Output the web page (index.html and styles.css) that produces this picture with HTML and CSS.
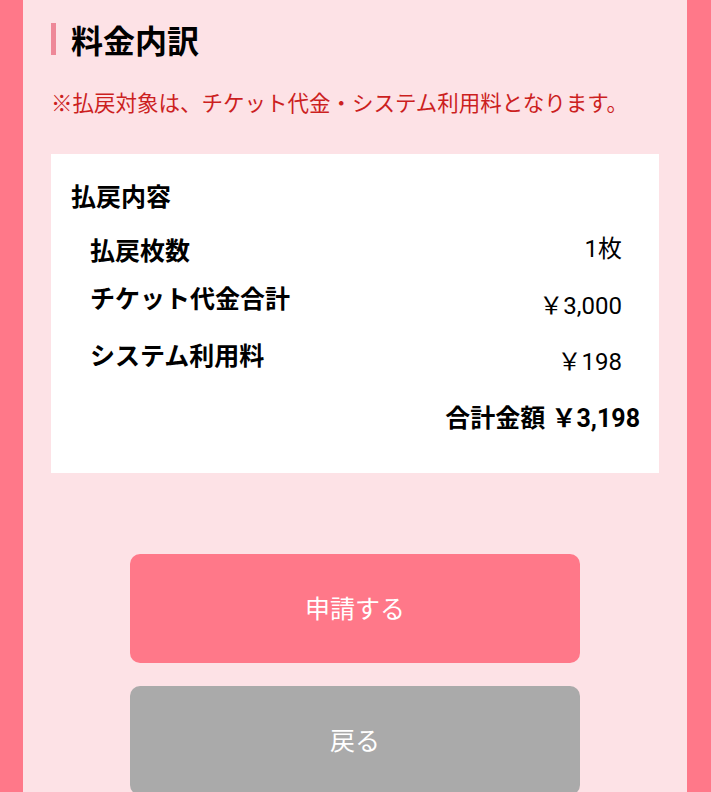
FILE: index.html
```html
<!DOCTYPE html>
<html lang="ja">
<head>
<meta charset="utf-8">
<link rel="stylesheet" href="styles.css">
</head>
<body>
<div class="frame">
  <main class="content">
    <h2 class="heading">料金内訳</h2>
    <p class="note">※払戻対象は、チケット代金・システム利用料となります。</p>
    <section class="box">
      <h3 class="box-title">払戻内容</h3>
      <div class="row">
        <span class="label">払戻枚数</span>
        <span class="value">1枚</span>
      </div>
      <div class="row">
        <span class="label">チケット代金合計</span>
        <span class="value value-low">￥3,000</span>
      </div>
      <div class="row">
        <span class="label">システム利用料</span>
        <span class="value value-low2">￥198</span>
      </div>
      <div class="total">合計金額 ￥3,198</div>
    </section>
    <div class="actions">
      <button class="btn btn-primary">申請する</button>
      <button class="btn btn-back">戻る</button>
    </div>
  </main>
</div>
</body>
</html>
```
FILE: styles.css
```css
html, body {
  margin: 0;
  padding: 0;
  height: 100%;
  overflow: hidden;
}
body {
  font-family: Roboto, "Noto Sans CJK JP", sans-serif;
  color: #000;
  background: #ff7889;
}
.frame {
  display: flex;
  padding: 0 24px 0 23px;
  min-height: 100%;
}
.content {
  flex: 1;
  background: #fde2e6;
  padding: 0 28px 0 28px;
}
.heading {
  margin: 0;
  padding-top: 19px;
  font-size: 32px;
  line-height: 40px;
  font-weight: 700;
  display: flex;
  align-items: center;
  gap: 15px;
  font-family: "Noto Sans CJK JP", sans-serif;
}
.heading::before {
  content: "";
  width: 5px;
  height: 32px;
  background: #ee8898;
}
.note {
  margin: 27px 0 0;
  font-size: 21.5px;
  line-height: 32px;
  color: #cc1f1f;
  font-family: "Noto Sans CJK JP", sans-serif;
}
.box {
  margin-top: 36px;
  background: #fff;
  padding: 25px 19px 38px 20px;
}
.box-title {
  margin: 0;
  font-size: 25px;
  line-height: 32px;
  font-weight: 700;
  font-family: "Noto Sans CJK JP", sans-serif;
}
.row {
  display: flex;
  justify-content: space-between;
  align-items: flex-start;
  padding: 0 18px 0 19px;
  margin-top: 16px;
}
.box-title + .row {
  margin-top: 22px;
}
.label {
  font-size: 25px;
  line-height: 32px;
  font-weight: 700;
  font-family: "Noto Sans CJK JP", sans-serif;
}
.value {
  font-size: 24px;
  line-height: 32px;
}
.value-low {
  margin-top: 9px;
}
.value-low2 {
  margin-top: 8px;
}
.total {
  margin-top: 25px;
  text-align: right;
  font-size: 25px;
  line-height: 32px;
  font-weight: 700;
}
.actions {
  margin-top: 81px;
  display: flex;
  flex-direction: column;
  align-items: center;
  gap: 23px;
}
.btn {
  width: 450px;
  height: 109px;
  border: none;
  border-radius: 10px;
  color: #fff;
  font-family: "Noto Sans CJK JP", sans-serif;
  font-size: 25px;
  padding: 0 0 4px;
  cursor: pointer;
}
.btn-primary {
  background: #ff7889;
}
.btn-back {
  background: #aaaaaa;
}
```
